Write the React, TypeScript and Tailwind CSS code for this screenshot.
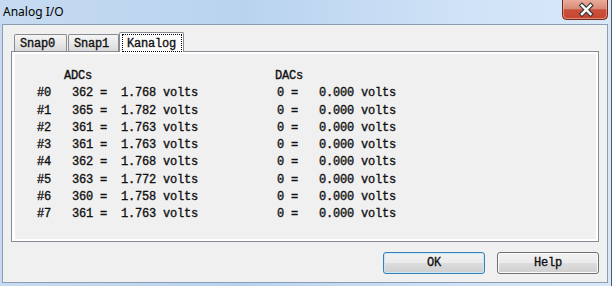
import React from "react";

const rows: [string, string, string][] = [
  ["#0", "362", "1.768"],
  ["#1", "365", "1.782"],
  ["#2", "361", "1.763"],
  ["#3", "361", "1.763"],
  ["#4", "362", "1.768"],
  ["#5", "363", "1.772"],
  ["#6", "360", "1.758"],
  ["#7", "361", "1.763"],
];

const mono =
  "font-['Liberation_Mono','Courier_New',monospace] text-[12px] tracking-[-0.2px] font-normal text-[#111] [-webkit-text-stroke:0.35px_#111]";

function CloseButton() {
  return (
    <svg width="46" height="20" viewBox="0 0 46 20">
      <defs>
        <linearGradient id="cg" x1="0" y1="0" x2="0" y2="1">
          <stop offset="0" stopColor="#e9ab9b" />
          <stop offset="0.45" stopColor="#d98a78" />
          <stop offset="0.5" stopColor="#c9503b" />
          <stop offset="1" stopColor="#c8442d" />
        </linearGradient>
      </defs>
      <path d="M0.5 0 V15.5 Q0.5 19.5 4.5 19.5 H41.5 Q45.5 19.5 45.5 15.5 V0" fill="url(#cg)" stroke="#6a2a20" strokeWidth="1" />
      <path d="M1.5 0 V15 Q1.5 18.5 5 18.5 H41 Q44.5 18.5 44.5 15 V0" fill="none" stroke="#f0b8a8" strokeOpacity="0.6" strokeWidth="1" />
      <path d="M20 5.5 L28.5 14 M28.5 5.5 L20 14" stroke="#3a3a3a" strokeWidth="4.6" strokeLinecap="square" />
      <path d="M20 5.5 L28.5 14 M28.5 5.5 L20 14" stroke="#ffffff" strokeWidth="2.4" strokeLinecap="square" />
    </svg>
  );
}

function Tab({ label }: { label: string }) {
  return (
    <div className="h-[17px] border border-b-0 border-[#898c95] rounded-t-[2px] bg-[linear-gradient(to_bottom,#f5f5f5_0%,#e8e8e8_50%,#d9d9d9_100%)] flex items-center pl-[5px] pt-[2px]">
      <span className={`${mono} leading-none`}>{label}</span>
    </div>
  );
}

export default function App() {
  return (
    <div className="w-[612px] h-[286px] flex flex-col bg-[linear-gradient(to_right,#c6dbf1_0%,#b9d3ef_40%,#cfe2f7_75%,#d9e8f8_100%)] border-r border-[#4b5868] overflow-hidden">
      <div className="h-[24px] flex items-start justify-between">
        <span className="pl-[3px] pt-[4px] font-['Noto_Sans',sans-serif] text-[12px] leading-[16px] text-black">Analog I/O</span>
        <div className="mr-[3px] h-[20px]">
          <CloseButton />
        </div>
      </div>
      <div className="flex-1 pl-[2px] pr-[7px] pb-[3px] flex">
        <div className="flex-1 border border-[#8b9db3] bg-[#f0f0f0] flex flex-col px-[8px] pt-[7px]">
          <div className="flex items-end h-[19px] pl-[3px]">
            <div className="w-[53px]">
              <Tab label="Snap0" />
            </div>
            <div className="w-[51px] ml-[1px]">
              <Tab label="Snap1" />
            </div>
            <div className="relative z-10 w-[65px] h-[20px] -mb-[1px] border border-b-0 border-[#898c95] rounded-t-[2px] bg-[#fcfcfc] flex justify-center pt-[1px]">
              <span className="w-[60px] h-[18px] border border-dotted border-black flex items-center justify-center pt-[1px]">
                <span className={`${mono} leading-none`}>Kanalog</span>
              </span>
            </div>
          </div>
          <div className="w-[588px] h-[191px] border border-[#898c95] bg-white pt-[2px] pl-[3px] pr-[2px] pb-[2px] flex">
            <div className="flex-1 bg-[#f0f0f0] pt-[14px] pl-[22px] flex">
              <div className="w-[240px] flex flex-col">
                <div className={`${mono} leading-[17.3px] pl-[27px]`}>ADCs</div>
                {rows.map(([n, a, v]) => (
                  <div key={n} className={`${mono} leading-[17.3px] whitespace-pre`}>
                    {`${n}   ${a} =  ${v} volts`}
                  </div>
                ))}
              </div>
              <div className="flex flex-col">
                <div className={`${mono} leading-[17.3px] -ml-[2px]`}>DACs</div>
                {rows.map(([n]) => (
                  <div key={n} className={`${mono} leading-[17.3px] whitespace-pre`}>
                    {"0 =   0.000 volts"}
                  </div>
                ))}
              </div>
            </div>
          </div>
          <div className="flex justify-end gap-[12px] mt-[10px] w-[588px]">
            <button className="w-[102px] h-[22px] rounded-[3px] border border-[#3c7fb1] shadow-[inset_0_0_0_1px_#c4e8fb] bg-[linear-gradient(to_bottom,#f2f2f2_0%,#ebebeb_50%,#dddddd_50%,#cfcfcf_100%)] flex items-center justify-center">
              <span className={`${mono} leading-none`}>OK</span>
            </button>
            <button className="w-[102px] h-[22px] rounded-[3px] border border-[#707070] shadow-[inset_0_0_0_1px_#fbfbfb] bg-[linear-gradient(to_bottom,#f2f2f2_0%,#ebebeb_50%,#dddddd_50%,#cfcfcf_100%)] flex items-center justify-center">
              <span className={`${mono} leading-none`}>Help</span>
            </button>
          </div>
        </div>
      </div>
    </div>
  );
}
